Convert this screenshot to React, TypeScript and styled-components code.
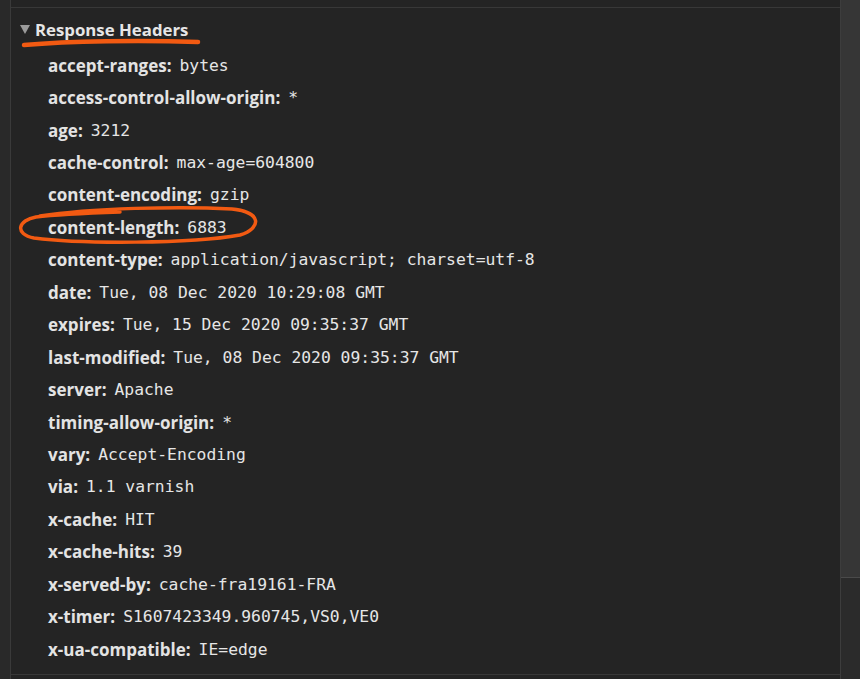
import React from "react";
import styled, { createGlobalStyle } from "styled-components";

const Global = createGlobalStyle`
  html, body { margin: 0; padding: 0; background: #242424; }
  body { width: 860px; height: 679px; overflow: hidden; }
`;

const Frame = styled.div`
  display: flex;
  width: 860px;
  height: 679px;
  background: #242424;
`;

const Gutter = styled.div`
  width: 10px;
  flex: none;
  background: #292929;
  border-right: 1px solid #3a3a3a;
`;

const Main = styled.div`
  flex: 1;
  display: flex;
  flex-direction: column;
  min-width: 0;
`;

const TopStrip = styled.div`
  height: 7px;
  flex: none;
  border-bottom: 1px solid #383838;
`;

const Section = styled.div`
  position: relative;
  padding: 5px 0 9px 0;
  border-bottom: 1px solid #383838;
`;

const Header = styled.div`
  display: flex;
  align-items: center;
  height: 32px;
  margin-bottom: 4px;
  padding-left: 9px;
  gap: 5px;
  font-family: "Open Sans", "Noto Sans", sans-serif;
  font-weight: 700;
  font-size: 16.8px;
  color: #e6e6e6;
`;

const Triangle = styled.span`
  width: 0;
  height: 0;
  border-left: 5px solid transparent;
  border-right: 5px solid transparent;
  border-top: 9px solid #9a9a9a;
`;

const Row = styled.div`
  display: flex;
  align-items: center;
  height: 32.44px;
  padding-left: 37px;
  white-space: nowrap;
`;

const Key = styled.span`
  font-family: "Open Sans", "Noto Sans", sans-serif;
  font-weight: 700;
  font-size: 17px;
  color: #e3e3e3;
  margin-right: 8px;
`;

const Value = styled.span`
  font-family: "DejaVu Sans Mono", "Liberation Mono", monospace;
  font-size: 16.35px;
  color: #e6e6e6;
`;

const Scrollbar = styled.div`
  width: 19px;
  flex: none;
  background: #2b2b2b;
  border-left: 1px solid #3d3d3d;
  display: flex;
  flex-direction: column;
`;

const Thumb = styled.div`
  height: 577px;
  background: #363636;
  border-bottom: 1px solid #4a4a4a;
`;

const Marks = styled.svg`
  position: absolute;
  left: -11px;
  top: -8px;
  pointer-events: none;
  overflow: visible;
`;

const headers: [string, string][] = [
  ["accept-ranges:", "bytes"],
  ["access-control-allow-origin:", "*"],
  ["age:", "3212"],
  ["cache-control:", "max-age=604800"],
  ["content-encoding:", "gzip"],
  ["content-length:", "6883"],
  ["content-type:", "application/javascript; charset=utf-8"],
  ["date:", "Tue, 08 Dec 2020 10:29:08 GMT"],
  ["expires:", "Tue, 15 Dec 2020 09:35:37 GMT"],
  ["last-modified:", "Tue, 08 Dec 2020 09:35:37 GMT"],
  ["server:", "Apache"],
  ["timing-allow-origin:", "*"],
  ["vary:", "Accept-Encoding"],
  ["via:", "1.1 varnish"],
  ["x-cache:", "HIT"],
  ["x-cache-hits:", "39"],
  ["x-served-by:", "cache-fra19161-FRA"],
  ["x-timer:", "S1607423349.960745,VS0,VE0"],
  ["x-ua-compatible:", "IE=edge"],
];

export default function App() {
  return (
    <>
      <Global />
      <Frame>
        <Gutter />
        <Main>
          <TopStrip />
          <Section>
            <Header>
              <Triangle />
              Response Headers
            </Header>
            {headers.map(([k, v]) => (
              <Row key={k}>
                <Key>{k}</Key>
                <Value>{v}</Value>
              </Row>
            ))}
            <Marks width="300" height="300" viewBox="0 0 300 300">
              <path
                d="M24 45 C 70 41, 140 40, 198 42"
                stroke="#f25a12"
                strokeWidth="4.5"
                strokeLinecap="round"
                fill="none"
              />
              <path
                d="M 40 216 C 90 208, 180 206, 232 209 C 262 212, 262 228, 240 235 C 190 244, 80 244, 34 238 C 14 234, 18 220, 36 217 C 60 214, 90 213, 120 212"
                stroke="#f25a12"
                strokeWidth="3.5"
                strokeLinecap="round"
                fill="none"
              />
            </Marks>
          </Section>
        </Main>
        <Scrollbar>
          <Thumb />
        </Scrollbar>
      </Frame>
    </>
  );
}
